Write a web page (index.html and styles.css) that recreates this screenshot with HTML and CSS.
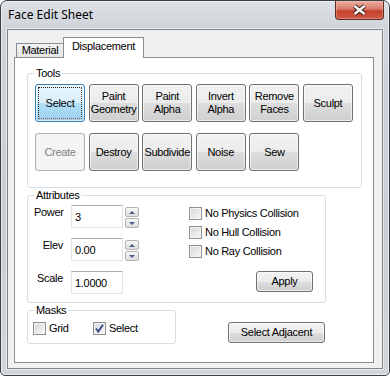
FILE: index.html
```html
<!DOCTYPE html>
<html lang="en">
<head>
    <meta charset="UTF-8">
    <title>Face Edit Sheet</title>
    <link rel="stylesheet" href="styles.css">
</head>
<body>
    <div class="window">
        <div class="titlebar">
            <span class="title">Face Edit Sheet</span>
            <div class="close">
                <svg width="47" height="18" viewBox="0 0 47 18">
                    <path d="M18.5 5 L28.5 13 M28.5 5 L18.5 13" stroke="#3a1a14" stroke-width="4.4" fill="none"/>
                    <path d="M18.5 5 L28.5 13 M28.5 5 L18.5 13" stroke="#ffffff" stroke-width="2.4" fill="none"/>
                </svg>
            </div>
        </div>

        <div class="client">
            <div class="tabs">
                <div class="tab">Material</div>
                <div class="tab active">Displacement</div>
            </div>

            <div class="page">
                <fieldset class="group tools">
                    <legend>Tools</legend>
                    <div class="tool-grid">
                        <button class="btn focused">Select</button>
                        <button class="btn">Paint<br>Geometry</button>
                        <button class="btn">Paint<br>Alpha</button>
                        <button class="btn">Invert<br>Alpha</button>
                        <button class="btn">Remove<br>Faces</button>
                        <button class="btn">Sculpt</button>
                        <button class="btn" disabled>Create</button>
                        <button class="btn">Destroy</button>
                        <button class="btn">Subdivide</button>
                        <button class="btn">Noise</button>
                        <button class="btn">Sew</button>
                    </div>
                </fieldset>

                <fieldset class="group attributes">
                    <legend>Attributes</legend>
                    <div class="attr-body">
                        <div class="fields">
                            <div class="field">
                                <span class="field-label">Power</span>
                                <input class="text" type="text" value="3">
                                <div class="spin">
                                    <div class="spin-btn"><span class="arrow-up"></span></div>
                                    <div class="spin-btn"><span class="arrow-down"></span></div>
                                </div>
                            </div>
                            <div class="field">
                                <span class="field-label">Elev</span>
                                <input class="text" type="text" value="0.00">
                                <div class="spin">
                                    <div class="spin-btn"><span class="arrow-up"></span></div>
                                    <div class="spin-btn"><span class="arrow-down"></span></div>
                                </div>
                            </div>
                            <div class="field">
                                <span class="field-label">Scale</span>
                                <input class="text" type="text" value="1.0000">
                            </div>
                        </div>

                        <div class="flags">
                            <div class="check"><span class="box"></span>No Physics Collision</div>
                            <div class="check"><span class="box"></span>No Hull Collision</div>
                            <div class="check"><span class="box"></span>No Ray Collision</div>
                            <button class="btn apply">Apply</button>
                        </div>
                    </div>
                </fieldset>

                <div class="bottom-row">
                    <fieldset class="group masks">
                        <legend>Masks</legend>
                        <div class="mask-items">
                            <div class="check grid-item"><span class="box"></span>Grid</div>
                            <div class="check"><span class="box">
                                <svg width="11" height="11" viewBox="0 0 11 11">
                                    <path d="M2 5.5 L4.3 8.5 L9 1.8" stroke="#3b4f8a" stroke-width="2" fill="none"/>
                                </svg>
                            </span>Select</div>
                        </div>
                    </fieldset>
                    <button class="btn adjacent">Select Adjacent</button>
                </div>
            </div>
        </div>
    </div>
</body>
</html>
```

FILE: styles.css
```css
body {
    margin: 0;
    background-color: #ffffff;
    font-family: "Liberation Sans", Arial, sans-serif;
    font-size: 11px;
    letter-spacing: -0.3px;
    color: #000000;
}
.window {
    width: 390px;
    height: 376px;
    box-sizing: border-box;
    border: 1px solid #3a3f45;
    border-radius: 7px 7px 5px 5px;
    background: linear-gradient(to bottom, #dde1e6 0, #cfd4da 28px, #c9ced4 60%, #d2d6db 100%);
    box-shadow: inset 0 0 0 1px rgba(255, 255, 255, 0.55);
    overflow: hidden;
}
.titlebar {
    height: 28px;
    display: flex;
    justify-content: space-between;
    align-items: flex-start;
}
.title {
    padding: 6px 0 0 7px;
    font-family: "Noto Sans", "Liberation Sans", sans-serif;
    font-size: 12px;
    line-height: 16px;
    letter-spacing: 0;
}
.close {
    width: 47px;
    height: 18px;
    margin-right: 5px;
    border: 1px solid #5e2a22;
    border-top: none;
    border-radius: 0 0 4px 4px;
    background: linear-gradient(to bottom, #eab0a2 0%, #d9796a 45%, #c5412d 55%, #cc5a44 100%);
    box-shadow: inset 0 0 0 1px rgba(255, 200, 190, 0.35);
}
.close svg {
    display: block;
}
.client {
    height: 340px;
    margin: 0 6px;
    box-sizing: border-box;
    border: 1px solid #7f858c;
    background-color: #f0f0f0;
    padding: 7px 0 0 6px;
    box-shadow: 0 0 0 1px rgba(255, 255, 255, 0.5);
}

/* tab strip */
.tabs {
    display: flex;
    align-items: flex-end;
    height: 20px;
    padding-left: 2px;
    position: relative;
    z-index: 1;
}
.tab {
    box-sizing: border-box;
    width: 47px;
    height: 14px;
    border: 1px solid #898c95;
    border-right: none;
    border-bottom: none;
    background: linear-gradient(to bottom, #f3f3f3, #e6e6e6);
    text-align: center;
    line-height: 13px;
}
.tab.active {
    width: 81px;
    height: 21px;
    margin-bottom: -1px;
    border-right: 1px solid #898c95;
    background: #ffffff;
    padding-top: 2px;
}
.page {
    width: 360px;
    height: 306px;
    box-sizing: border-box;
    border: 1px solid #898c95;
    background-color: #ffffff;
    padding: 8px 0 0 12px;
}

/* group boxes */
.group {
    margin: 0;
    border: 1px solid #d5dfe5;
    border-radius: 3px;
    box-sizing: border-box;
    min-width: 0;
}
.group legend {
    padding: 0 2px;
    line-height: 14px;
}
.tools {
    width: 335px;
    padding: 4px 6px 16px 6px;
}
.tool-grid {
    display: grid;
    grid-template-columns: repeat(6, 50px);
    grid-auto-rows: 38px;
    column-gap: 3.6px;
    row-gap: 11px;
    margin-left: 1px;
}
.attributes {
    width: 299px;
    padding: 3px 6px 8px 6px;
}
.masks {
    width: 149px;
    padding: 5px 6px 8px 6px;
}

/* buttons */
.btn {
    box-sizing: border-box;
    padding: 0;
    border: 1px solid #707070;
    border-radius: 3px;
    background: linear-gradient(to bottom, #f2f2f2 0%, #ebebeb 50%, #dddddd 51%, #cfcfcf 100%);
    box-shadow: inset 0 0 0 1px rgba(255, 255, 255, 0.6);
    font-family: inherit;
    font-size: 11px;
    letter-spacing: inherit;
    line-height: 13px;
    color: #000000;
    text-align: center;
    cursor: pointer;
}
.btn.focused {
    position: relative;
    border-color: #3c7fb1;
    background: linear-gradient(to bottom, #e8f5fc 0%, #d9effb 50%, #b4dff7 51%, #98d0ef 100%);
}
.btn.focused::after {
    content: "";
    position: absolute;
    top: 2px;
    left: 2px;
    right: 2px;
    bottom: 2px;
    border: 1px dotted #1e1e1e;
    border-bottom-color: #b4562a;
    border-right-color: #5a3a2a;
}
.btn:disabled {
    border-color: #adb2b5;
    background: #f4f4f4;
    color: #838383;
    box-shadow: none;
}
.apply {
    width: 57px;
    height: 21px;
    margin: 7px 0 0 67px;
}
.adjacent {
    width: 97px;
    height: 21px;
    margin: 19px 0 0 52px;
}

/* attribute fields */
.attr-body {
    display: flex;
}
.fields {
    display: flex;
    flex-direction: column;
    gap: 10px;
}
.field {
    display: flex;
    height: 23px;
}
.field-label {
    width: 29px;
    margin-right: 8px;
    text-align: right;
    line-height: 14px;
}
.text {
    width: 52px;
    height: 23px;
    box-sizing: border-box;
    margin: 0;
    padding: 0 3px;
    border: 1px solid #e2e3ea;
    border-top-color: #abadb3;
    font-family: inherit;
    font-size: 11px;
    letter-spacing: inherit;
    color: #000000;
    background: #ffffff;
}
.spin {
    display: flex;
    flex-direction: column;
    gap: 1px;
    margin: 2px 0 0 2px;
}
.spin-btn {
    width: 14px;
    height: 10px;
    box-sizing: border-box;
    border: 1px solid #b2b2b2;
    border-radius: 2px;
    background: linear-gradient(to bottom, #f7f7f7, #dedede);
    display: flex;
    align-items: center;
    justify-content: center;
}
.arrow-up {
    border-left: 3px solid transparent;
    border-right: 3px solid transparent;
    border-bottom: 3px solid #4b5d8a;
}
.arrow-down {
    border-left: 3px solid transparent;
    border-right: 3px solid transparent;
    border-top: 3px solid #4b5d8a;
}

/* checkboxes */
.flags {
    display: flex;
    flex-direction: column;
    align-items: flex-start;
    margin: 2px 0 0 50px;
}
.check {
    display: flex;
    align-items: flex-start;
    height: 19px;
    line-height: 13px;
}
.box {
    width: 13px;
    height: 13px;
    box-sizing: border-box;
    margin-right: 3px;
    border: 1px solid #8e8f8f;
    background: linear-gradient(135deg, #d4d4d4, #f9f9f9);
    box-shadow: inset 0 0 0 1px #f4f4f4;
    flex: none;
}
.box svg {
    display: block;
}
.bottom-row {
    display: flex;
    align-items: flex-start;
}
.mask-items {
    display: flex;
}
.mask-items .check {
    height: 13px;
}
.grid-item {
    width: 60px;
    margin-left: -1px;
}
```
